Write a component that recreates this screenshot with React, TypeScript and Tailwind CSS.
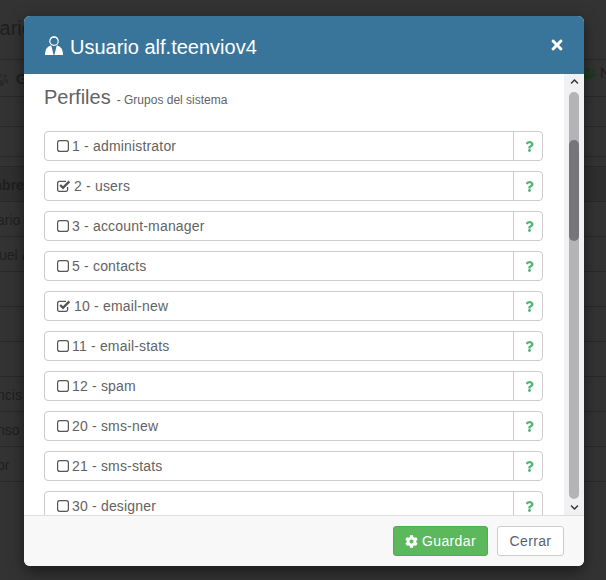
import { FaCog, FaQuestion, FaTimes, FaUsers, FaChevronUp, FaChevronDown } from "react-icons/fa"

const perfiles = [
  { id: 1, name: "administrator", on: false },
  { id: 2, name: "users", on: true },
  { id: 3, name: "account-manager", on: false },
  { id: 5, name: "contacts", on: false },
  { id: 10, name: "email-new", on: true },
  { id: 11, name: "email-stats", on: false },
  { id: 12, name: "spam", on: false },
  { id: 20, name: "sms-new", on: false },
  { id: 21, name: "sms-stats", on: false },
  { id: 30, name: "designer", on: false },
  { id: 31, name: "reports", on: false },
]

const filas = ["ario", "uel Á", "", "", "", "ncis", "nso", "or"]

function UserIcon() {
  return (
    <svg viewBox="0 0 18 20" className="mb-1 h-5 w-[18px] shrink-0" fill="white">
      <circle cx="9" cy="6.2" r="4.2" fill="none" stroke="white" strokeWidth="1.2" />
      <path d="M5.2 3.4 C6 .6 12 .6 12.8 3.4 C11 2.4 7 2.4 5.2 3.4 Z" />
      <path d="M0 20 C0 15 1.5 11.8 6.2 10.2 L8.6 20 Z" />
      <path d="M18 20 C18 15 16.5 11.8 11.8 10.2 L9.4 20 Z" />
    </svg>
  )
}

function Caja({ on }: { on: boolean }) {
  if (on) {
    return (
      <svg viewBox="0 0 14 12" className="h-3 w-[14px] shrink-0" fill="none" stroke="#555555">
        <path d="M10.6 7 V9.6 A1.8 1.8 0 0 1 8.8 11.4 H2.4 A1.8 1.8 0 0 1 .6 9.6 V3.2 A1.8 1.8 0 0 1 2.4 1.4 H9" strokeWidth="1.3" />
        <path d="M3.2 5 L6 7.8 L12.4 1.4" strokeWidth="2.4" />
      </svg>
    )
  }
  return (
    <svg viewBox="0 0 12 12" className="h-3 w-3 shrink-0" fill="none" stroke="#555555" strokeWidth="1.2">
      <rect x=".6" y=".6" width="10.8" height="10.8" rx="2.2" />
    </svg>
  )
}

function Fondo() {
  return (
    <div className="h-[580px] overflow-hidden bg-[#333333] text-[14px] text-[#1f1f1f]">
      <div className="h-[60px] border-b border-[#292929] pt-[14px] text-[20px] leading-[28px]">
        <span className="ml-[-36px]">Usuario</span>
      </div>
      <div className="flex h-[37px] justify-between border-b border-[#292929]">
        <span className="flex items-center gap-2 pt-[2px] font-bold">
          <FaUsers className="ml-[-12px] text-[20px] text-[#2a2a2a]" /> G
        </span>
        <span className="mr-[-4px] flex items-center gap-1 pb-[10px]">
          <FaUsers className="text-[16px] text-[#1b3a1d]" /> N
        </span>
      </div>
      <div className="h-[30px] border-b border-[#292929]" />
      <div className="h-[30px] border-b border-[#292929]" />
      <div className="h-[10px] border-b border-[#292929]" />
      <div className="h-[35px] border-b border-[#292929] bg-[#2f2f2f] pt-[8px] font-bold">
        <span className="ml-[-29px]">Nombre</span>
      </div>
      {filas.map((f, i) => (
        <div key={i} className="h-[35px] whitespace-nowrap border-b border-[#292929] pt-[8px]">
          <span className={i === 1 ? "ml-[-1px]" : "ml-[-3px]"}>{f}</span>
        </div>
      ))}
    </div>
  )
}

export default function App() {
  return (
    <div className="relative h-[580px] w-[606px] overflow-hidden font-['Liberation_Sans',sans-serif]">
      <Fondo />
      <div className="absolute top-4 left-6 flex h-[550px] w-[560px] flex-col overflow-hidden rounded-md bg-white shadow-[0_5px_15px_rgba(0,0,0,0.5)]">
        <div className="flex h-[58px] shrink-0 items-center justify-between bg-[#39759b] pr-[19px] pl-[21px] text-white">
          <h4 className="flex items-center gap-[7px] pt-[3px] text-[20px] leading-none">
            <UserIcon />
            Usuario alf.teenviov4
          </h4>
          <FaTimes className="mb-[1px] text-[16px]" />
        </div>
        <div className="flex min-h-0 flex-1">
          <div className="min-w-0 flex-1 overflow-hidden px-5 pt-2">
            <div className="mb-[23px] flex h-[26px] items-baseline gap-[6px] text-[#636363]">
              <span className="text-[20px]">Perfiles</span>
              <span className="text-[12px]">- Grupos del sistema</span>
            </div>
            <div className="flex flex-col gap-[10px]">
              {perfiles.map((p) => (
                <div key={p.id} className="flex h-[30px] w-[499px] shrink-0 rounded border border-[#cccccc] text-[14px] tracking-[0.18px] text-[#636363]">
                  <div className="flex min-w-0 flex-1 items-center gap-[3px] pl-3">
                    <Caja on={p.on} />
                    <span>
                      {p.id} - {p.name}
                    </span>
                  </div>
                  <div className="flex w-[29px] items-center justify-center border-l border-[#cccccc] pl-[3px]">
                    <FaQuestion className="text-[11px] text-[#52b577]" />
                  </div>
                </div>
              ))}
            </div>
          </div>
          <div className="flex w-5 shrink-0 flex-col items-center bg-[#f1f1f3]">
            <FaChevronUp className="mt-[3px] h-[9px] text-[9px] text-[#333333]" />
            <div className="mt-[6px] h-[407px] w-[10px] overflow-hidden rounded-full bg-[#b4b4b6] pt-[48px]">
              <div className="h-[101px] w-[10px] rounded-full bg-[#757679]" />
            </div>
            <FaChevronDown className="mt-[4px] h-[9px] text-[9px] text-[#333333]" />
          </div>
        </div>
        <div className="flex h-[51px] shrink-0 items-center justify-end gap-[9px] border-t border-[#dddddd] bg-[#f8f8f8] pr-5">
          <button className="flex h-[30px] w-[95px] items-center justify-center gap-1 rounded-[3px] border border-[#4cae4c] bg-[#5cb85c] text-[14px] tracking-[0.35px] text-white">
            <FaCog className="text-[13px]" /> Guardar
          </button>
          <button className="h-[30px] w-[67px] rounded-[3px] border border-[#cccccc] bg-white text-[14px] tracking-[0.35px] text-[#5a6070]">Cerrar</button>
        </div>
      </div>
    </div>
  )
}
